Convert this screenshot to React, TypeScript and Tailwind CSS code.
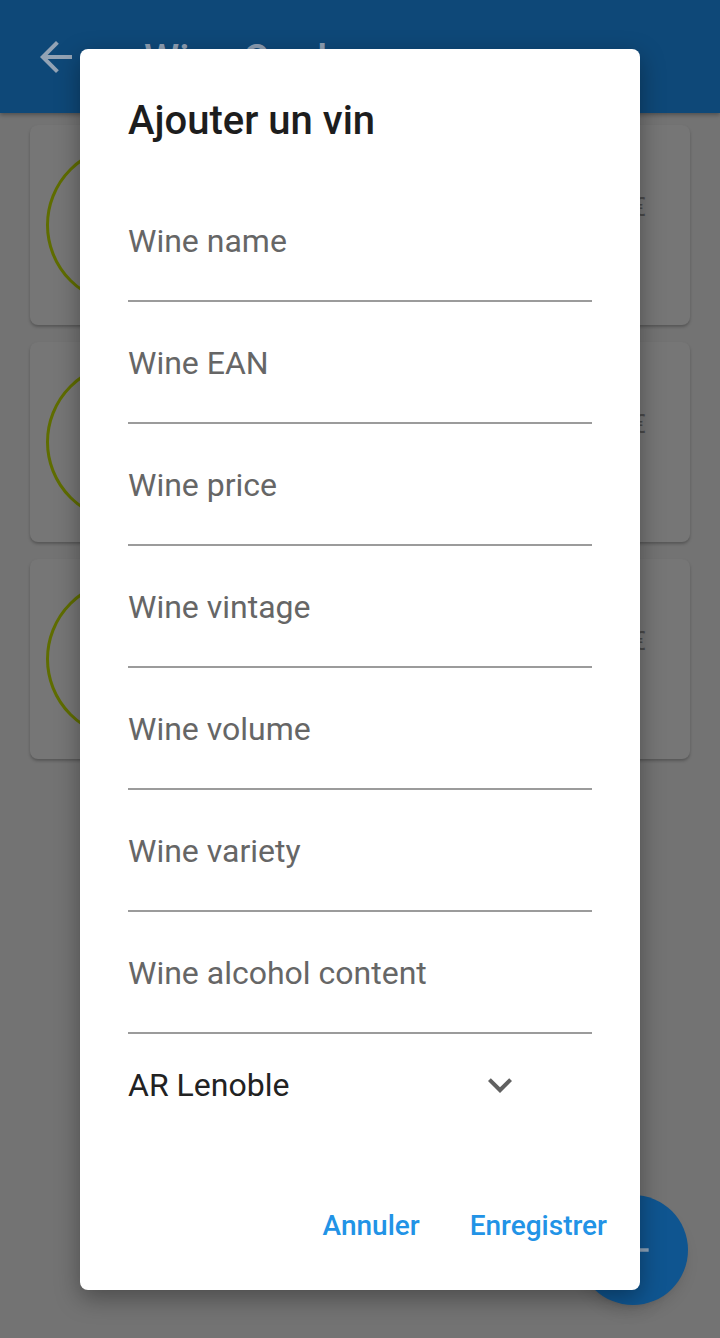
import React from 'react';

const fields = [
  'Wine name',
  'Wine EAN',
  'Wine price',
  'Wine vintage',
  'Wine volume',
  'Wine variety',
  'Wine alcohol content',
];

const WineCard: React.FC = () => (
  <div className="h-[200px] rounded-[8px] bg-[#767676] shadow-[0_2px_3px_rgba(0,0,0,0.25)] flex items-center">
    <div className="ml-[16px] w-[160px] h-[160px] rounded-full border-[3px] border-[#5f6d00]" />
    <span className="ml-auto mr-[44px] self-start mt-[68px] text-[26px] leading-[28px] text-[#4a4a4a]">25 €</span>
  </div>
);

const App: React.FC = () => {
  return (
    <div className="relative w-[720px] h-[1338px] overflow-hidden bg-[#737373] font-['Roboto',sans-serif]">
      <header className="h-[113px] bg-[#0e4878] flex items-center shadow-[0_2px_4px_rgba(0,0,0,0.3)]">
        <svg className="ml-[32px]" width="48" height="48" viewBox="0 0 24 24" fill="#93a3b5">
          <path d="M20 11H7.83l5.59-5.59L12 4l-8 8 8 8 1.41-1.41L7.83 13H20v-2z" />
        </svg>
        <span className="ml-[64px] mt-[6px] text-[40px] leading-[48px] font-medium text-[#8d9eb2]">Wine Cards</span>
      </header>

      <main className="px-[30px] pt-[12px] flex flex-col gap-[17px]">
        <WineCard />
        <WineCard />
        <WineCard />
      </main>

      <div className="absolute left-[578px] top-[1195px] w-[110px] h-[110px] rounded-full bg-[#0f5590] shadow-lg flex items-center justify-center">
        <svg className="ml-[8px]" width="40" height="40" viewBox="0 0 24 24" fill="#8ea3b8">
          <path d="M19 13h-6v6h-2v-6H5v-2h6V5h2v6h6v2z" />
        </svg>
      </div>

      <div className="absolute left-[80px] top-[49px] w-[560px] h-[1241px] bg-white rounded-[8px] shadow-[0_8px_24px_rgba(0,0,0,0.35)] flex flex-col">
        <h2 className="pt-[48px] px-[48px] text-[40px] leading-[48px] font-medium text-[#1d1d1d]">Ajouter un vin</h2>

        <div className="mx-[48px] mt-[35px] flex flex-col">
          {fields.map((f) => (
            <div key={f} className="pt-[41px] pb-[39px] border-b-2 border-[#9b9b9b]">
              <span className="block text-[32px] leading-[40px] text-[#666666]">{f}</span>
            </div>
          ))}
          <div className="mt-[27px] h-[48px] w-[396px] flex items-center justify-between">
            <span className="text-[32px] leading-[40px] text-[#222222]">AR Lenoble</span>
            <svg width="48" height="48" viewBox="0 0 24 24" fill="#616161">
              <path d="M16.59 8.59L12 13.17 7.41 8.59 6 10l6 6 6-6z" />
            </svg>
          </div>
        </div>

        <div className="mt-auto pb-[44px] pr-[33px] flex justify-end gap-[50px]">
          <span className="text-[28px] leading-[40px] font-medium text-[#2293e6]">Annuler</span>
          <span className="text-[28px] leading-[40px] font-medium text-[#2293e6]">Enregistrer</span>
        </div>
      </div>
    </div>
  );
};

export default App;
